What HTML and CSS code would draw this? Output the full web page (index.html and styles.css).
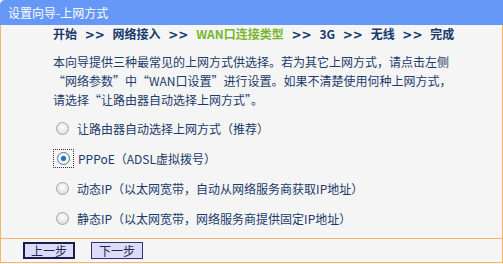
FILE: index.html
```html
<!DOCTYPE html>
<html lang="zh-CN">
<head>
    <meta charset="UTF-8">
    <title>设置向导-上网方式</title>
    <link rel="stylesheet" href="styles.css">
</head>
<body>
    <div class="wizard">
        <div class="title">设置向导-上网方式</div>

        <div class="content">
            <div class="steps">
                开始 <span class="sep">&gt;&gt;</span> 网络接入 <span class="sep">&gt;&gt;</span>
                <span class="current">WAN口连接类型</span> <span class="sep">&gt;&gt;</span> 3G
                <span class="sep">&gt;&gt;</span> 无线 <span class="sep">&gt;&gt;</span> 完成
            </div>

            <p class="intro">本向导提供三种最常见的上网方式供选择。若为其它上网方式，请点击左侧<br>“网络参数”中“WAN口设置”进行设置。如果不清楚使用何种上网方式，<br>请选择“让路由器自动选择上网方式”。</p>

            <div class="options">
                <label class="option"><input type="radio" name="wan" value="auto"><span>让路由器自动选择上网方式（推荐）</span></label>
                <label class="option"><span class="focus"><input type="radio" name="wan" value="pppoe" checked></span><span>PPPoE（ADSL虚拟拨号）</span></label>
                <label class="option"><input type="radio" name="wan" value="dhcp"><span>动态IP（以太网宽带，自动从网络服务商获取IP地址）</span></label>
                <label class="option"><input type="radio" name="wan" value="static"><span>静态IP（以太网宽带，网络服务商提供固定IP地址）</span></label>
            </div>
        </div>

        <div class="actions">
            <button class="btn default">上一步</button>
            <button class="btn">下一步</button>
        </div>
    </div>
</body>
</html>
```

FILE: styles.css
```css
body {
    margin: 0;
    font-family: "Noto Sans CJK SC", "DejaVu Sans", sans-serif;
    font-size: 12px;
    color: #1b3a6b;
    background-color: #ffffff;
}
.wizard {
    width: 503px;
    height: 264px;
    background-color: #f5f5f5;
}
.title {
    height: 25px;
    line-height: 25px;
    padding-left: 8px;
    color: #ffffff;
    background-color: #6698f7;
    border-top-left-radius: 5px;
}
.content {
    height: 214px;
    padding-left: 52px;
    border-left: 1px solid #f2b66a;
    border-right: 1px solid #f2b66a;
    border-bottom: 1px solid #f2b66a;
    box-sizing: border-box;
}
.steps {
    line-height: 18px;
    font-weight: bold;
    color: #16396e;
    word-spacing: 5px;
}
.steps .sep {
    font-family: "DejaVu Sans", sans-serif;
    font-size: 12px;
    letter-spacing: 0;
}
.steps .current {
    color: #7ab52d;
}
.intro {
    margin: 8px 0 4px 0;
    line-height: 19px;
    color: #1c3b6b;
}
.option {
    display: flex;
    align-items: center;
    height: 30px;
}
.option input, .focus {
    margin: 0 0 0 3px;
}
.option span:last-child {
    margin-left: 8px;
}
.option input {
    appearance: none;
    width: 13px;
    height: 13px;
    border-radius: 50%;
    border: 1px solid #a4a4a4;
    background: radial-gradient(circle at 50% 40%, #ffffff 0%, #e6e6e6 60%, #c8c8c8 100%);
    box-sizing: border-box;
}
.option input:checked {
    background: radial-gradient(circle, #1c5fa8 0%, #2e7fc9 28%, #dfe6ee 38%, #ffffff 60%, #c8c8c8 100%);
    border-color: #5a6f8a;
}
.focus {
    display: flex;
    padding: 2px 3px;
    margin-left: 0;
    border: 1px dotted #333333;
}
.focus input {
    margin: 0;
}
.option .focus + span {
    margin-left: 4px;
}
.actions {
    display: flex;
    align-items: center;
    gap: 16px;
    height: 24px;
    padding-left: 22px;
    border-left: 1px solid #f2b66a;
    border-right: 1px solid #f2b66a;
    border-bottom: 1px solid #f2b66a;
    box-sizing: border-box;
}
.btn {
    width: 52px;
    height: 17px;
    padding: 0;
    font-family: "Noto Sans CJK SC", sans-serif;
    font-size: 12px;
    line-height: 13px;
    color: #1b2a55;
    background-color: #dcdcf8;
    border: 1px solid #34346a;
}
.btn.default {
    border: 2px solid #1c1c4c;
}
```
